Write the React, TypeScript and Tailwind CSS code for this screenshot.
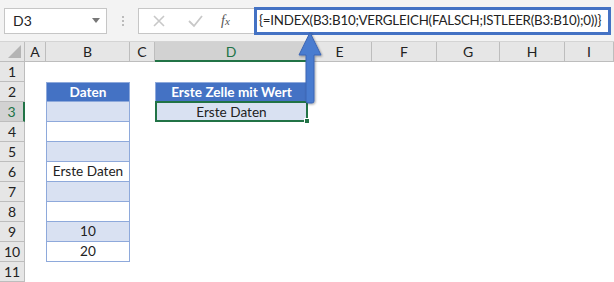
import React from 'react';

const COLS = [
  { key: 'A', w: 'w-[21px]' },
  { key: 'B', w: 'w-[84px]' },
  { key: 'C', w: 'w-[25px]' },
  { key: 'D', w: 'w-[153px]' },
  { key: 'E', w: 'w-[64px]' },
  { key: 'F', w: 'w-[65px]' },
  { key: 'G', w: 'w-[63px]' },
  { key: 'H', w: 'w-[65px]' },
  { key: 'I', w: 'flex-1' },
];

// Spalte B: Daten-Tabelle (Zeilen 3..10)
const DATA: Record<number, string> = { 6: 'Erste Daten', 9: '10', 10: '20' };

function NameBox() {
  return (
    <div className="flex h-[26px] w-[103px] shrink-0 items-center justify-between border border-[#c6c6c6] bg-white pl-[8px] pr-[6px] text-[14px] text-[#222]">
      <span>D3</span>
      <span className="h-0 w-0 border-x-[4px] border-t-[5px] border-x-transparent border-t-[#777]" />
    </div>
  );
}

function FormulaBar() {
  return (
    <div className="flex h-[41px] items-center bg-[#f3f3f3] pl-[4px] pr-[3px]">
      <NameBox />
      <div className="flex w-[31px] shrink-0 flex-col items-center gap-[2px]">
        <span className="h-[2px] w-[2px] bg-[#bbb]" />
        <span className="h-[2px] w-[2px] bg-[#bbb]" />
        <span className="h-[2px] w-[2px] bg-[#bbb]" />
      </div>
      <div className="flex h-[26px] w-[116px] shrink-0 items-center border-y border-l border-[#c6c6c6] bg-white">
        <svg width="36" height="26" viewBox="0 0 36 26" className="ml-[2px]">
          <path d="M13 8 L23 18 M23 8 L13 18" stroke="#c8c8c8" strokeWidth="1.6" />
        </svg>
        <svg width="36" height="26" viewBox="0 0 36 26">
          <path d="M12 13 L17 18 L25 8" stroke="#c8c8c8" strokeWidth="1.8" fill="none" />
        </svg>
        <span className="ml-[8px] font-['Liberation_Serif',serif] text-[14px] italic text-[#555]">
          f<span className="text-[11px]">x</span>
        </span>
      </div>
      <div className="flex h-[28px] min-w-0 flex-1 items-center overflow-hidden whitespace-nowrap border-[3px] border-[#4472c4] bg-white pl-[2px] text-[13.3px] tracking-[-0.2px] text-[#222]">
        {'{=INDEX(B3:B10;VERGLEICH(FALSCH;ISTLEER(B3:B10);0))}'}
      </div>
    </div>
  );
}

function HeaderRow() {
  return (
    <div className="flex h-[21px] border-t border-[#d4d4d4] bg-[#e6e6e6] text-[14px]">
      <div className="flex w-[25px] items-end justify-end border-r border-b border-[#bdbdbd] pb-[3px] pr-[3px]">
        <svg width="13" height="13" viewBox="0 0 13 13">
          <path d="M13 0 L13 13 L0 13 Z" fill="#b4b4b4" />
        </svg>
      </div>
      {COLS.map((c) => {
        const sel = c.key === 'D';
        return (
          <div
            key={c.key}
            className={`${c.w} flex items-center justify-center border-r border-[#bdbdbd] ${
              sel
                ? 'border-b-2 border-b-[#217346] bg-[#d2d2d2] text-[#217346]'
                : 'border-b border-b-[#bdbdbd] text-[#222]'
            }`}
          >
            {c.key}
          </div>
        );
      })}
    </div>
  );
}

function Cell({ row, col }: { row: number; col: string }) {
  const w = COLS.find((c) => c.key === col)!.w;
  if (col === 'B' && row >= 2 && row <= 10) {
    const header = row === 2;
    const band = row % 2 === 1;
    return (
      <div
        className={`${w} flex items-center justify-center border-x border-b border-[#8ea9db] ${
          header ? 'border-t bg-[#4472c4] font-bold text-white' : band ? 'bg-[#d9e1f2] text-[#222]' : 'bg-white text-[#222]'
        }`}
      >
        {header ? 'Daten' : DATA[row] ?? ''}
      </div>
    );
  }
  if (col === 'D' && row === 2) {
    return (
      <div className={`${w} flex items-center justify-center border-x border-y border-[#8ea9db] bg-[#4472c4] font-bold text-white`}>
        Erste Zelle mit Wert
      </div>
    );
  }
  if (col === 'D' && row === 3) {
    return (
      <div className={`${w} relative flex items-center justify-center bg-[#d9e1f2] text-[#222]`}>
        Erste Daten
        <div className="absolute -top-[1px] left-0 right-0 bottom-0 border-2 border-[#217346]" />
        <div className="absolute -bottom-[2px] -right-[2px] h-[6px] w-[6px] border border-white bg-[#217346]" />
      </div>
    );
  }
  return <div className={w} />;
}

function Row({ n }: { n: number }) {
  const sel = n === 3;
  return (
    <div className="flex h-[20px] text-[13.6px]">
      <div
        className={`flex w-[25px] items-center justify-center border-b border-[#bdbdbd] text-[14px] ${
          sel
            ? 'border-r-2 border-r-[#217346] bg-[#d2d2d2] text-[#217346]'
            : 'border-r border-r-[#bdbdbd] bg-[#e6e6e6] text-[#222]'
        }`}
      >
        {n}
      </div>
      {COLS.map((c) => (
        <Cell key={c.key} row={n} col={c.key} />
      ))}
    </div>
  );
}

function Arrow() {
  return (
    <svg className="absolute left-[297px] top-[31px]" width="28" height="76" viewBox="0 0 28 76">
      <defs>
        <filter id="sh" x="-50%" y="-20%" width="200%" height="140%">
          <feDropShadow dx="1" dy="1" stdDeviation="1.2" floodColor="#000" floodOpacity="0.35" />
        </filter>
      </defs>
      <path
        d="M13 1.5 L24 24 L17 24 L17 70 Q17 72 15 72 L11 72 Q9 72 9 70 L9 24 L2 24 Z"
        fill="#4a7bd0"
        stroke="#3c67b4"
        strokeWidth="1"
        filter="url(#sh)"
      />
    </svg>
  );
}

export default function App() {
  return (
    <div className="relative h-[282px] w-[614px] overflow-hidden bg-white font-['Lato','Noto_Sans',sans-serif]">
      <FormulaBar />
      <HeaderRow />
      {Array.from({ length: 11 }, (_, i) => (
        <Row key={i + 1} n={i + 1} />
      ))}
      <Arrow />
    </div>
  );
}
